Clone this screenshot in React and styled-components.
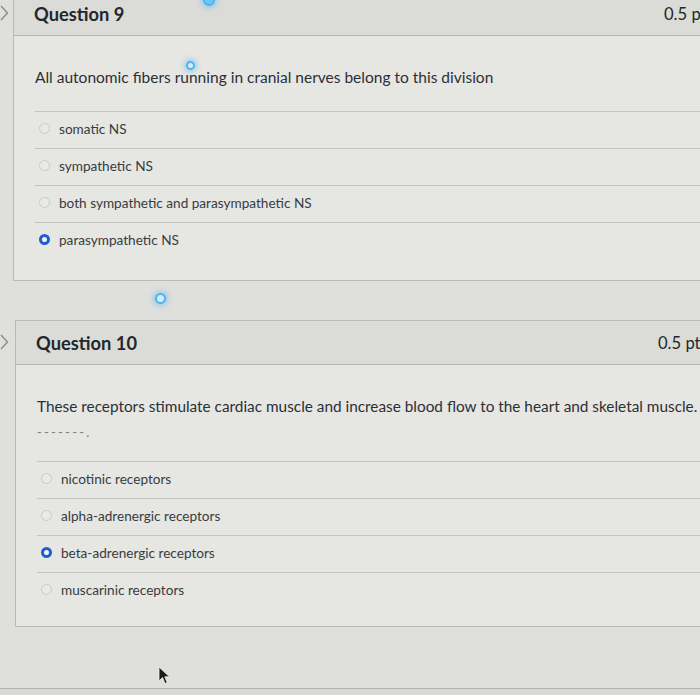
import styled, { createGlobalStyle } from 'styled-components'

const GlobalStyle = createGlobalStyle`
    html, body {
        margin: 0;
        padding: 0;
        background: #dfdfdc;
        overflow: hidden;
    }
    body {
        font-family: Lato, 'Open Sans', 'Liberation Sans', sans-serif;
        color: #2f3338;
    }
`

const questions = [
    {
        id: 9,
        title: 'Question 9',
        points: '0.5 p',
        text: 'All autonomic fibers running in cranial nerves belong to this division',
        blank: false,
        indent: 13,
        pointsWidth: 90,
        options: [
            { label: 'somatic NS' },
            { label: 'sympathetic NS' },
            { label: 'both sympathetic and parasympathetic NS' },
            { label: 'parasympathetic NS', checked: true },
        ],
    },
    {
        id: 10,
        title: 'Question 10',
        points: '0.5 pt',
        text: 'These receptors stimulate cardiac muscle and increase blood flow to the heart and skeletal muscle.',
        blank: true,
        indent: 15,
        pointsWidth: 98,
        options: [
            { label: 'nicotinic receptors' },
            { label: 'alpha-adrenergic receptors' },
            { label: 'beta-adrenergic receptors', checked: true },
            { label: 'muscarinic receptors' },
        ],
    },
]

const Chevron = () => (
    <svg width="9" height="16" viewBox="0 0 9 16">
        <path
            d="M1 1 L7.5 8 L1 15"
            fill="none"
            stroke="#8a8c8e"
            strokeWidth="1.4"
            strokeLinejoin="round"
        />
    </svg>
)

const Cursor = () => (
    <svg width="14" height="20" viewBox="0 0 14 20">
        <path
            d="M1 1 L1 15 L4.5 11.5 L7 17.5 L9.2 16.6 L6.8 10.8 L11.5 10.8 Z"
            fill="#1b1b1b"
            stroke="#f0f0f0"
            strokeWidth="0.8"
        />
    </svg>
)

export default function App() {
    return (
        <Page>
            <GlobalStyle />
            {questions.map((q) => (
                <QuestionRow key={q.id}>
                    <Marker $width={q.indent}>
                        <Chevron />
                    </Marker>
                    <Card>
                        <CardHeader>
                            <Title>{q.title}</Title>
                            <Points $width={q.pointsWidth}>{q.points}</Points>
                        </CardHeader>
                        <CardBody $bottom={q.blank ? 17 : 21}>
                            <QuestionText $wide={q.blank}>{q.text}</QuestionText>
                            {q.blank && <Blank>-------.</Blank>}
                            <Options $gap={q.blank ? 20 : 23}>
                                {q.options.map((o) => (
                                    <Option key={o.label}>
                                        <Radio $checked={o.checked} />
                                        <OptionLabel>{o.label}</OptionLabel>
                                    </Option>
                                ))}
                            </Options>
                        </CardBody>
                    </Card>
                </QuestionRow>
            ))}
            <Footer />
            <Glare $x={203} $y={-6} $size={12} $soft />
            <Glare $x={186} $y={61} $size={9} />
            <Glare $x={155} $y={293} $size={11} />
            <CursorSpot>
                <Cursor />
            </CursorSpot>
        </Page>
    )
}

const Page = styled.div`
    position: relative;
    width: 700px;
    height: 704px;
    overflow: hidden;
    display: flex;
    flex-direction: column;
    gap: 39px;
    margin-top: -9px;
`

const QuestionRow = styled.div`
    display: flex;
    align-items: flex-start;
`

const Marker = styled.div`
    width: ${({ $width }) => $width}px;
    flex-shrink: 0;
    height: 44px;
    display: flex;
    align-items: center;
    overflow: hidden;
`

const Card = styled.div`
    flex-shrink: 0;
    width: 760px;
    border: 1px solid #b9bab8;
    background: #e6e6e3;
`

const CardHeader = styled.div`
    height: 44px;
    box-sizing: border-box;
    background: #dbdbd8;
    border-bottom: 1px solid #b7b8b6;
    display: flex;
    align-items: center;
    padding: 0 20px;
    gap: 20px;
`

const Title = styled.h3`
    margin: 0;
    font-size: 18.3px;
    font-weight: 700;
    color: #23272b;
    flex: 1;
`

const Points = styled.span`
    width: ${({ $width }) => $width}px;
    font-size: 16.6px;
    font-weight: 400;
    color: #23272b;
`

const CardBody = styled.div`
    padding: 30px 0 ${({ $bottom }) => $bottom}px 21px;
`

const QuestionText = styled.p`
    margin: 0;
    font-size: ${({ $wide }) => ($wide ? 15.35 : 15.5)}px;
    line-height: 22px;
    white-space: nowrap;
    color: #2c3035;
`

const Blank = styled.div`
    margin-top: 6px;
    font-size: 13px;
    line-height: 18px;
    letter-spacing: 2.2px;
    color: #7c7f82;
`

const Options = styled.div`
    margin-top: ${({ $gap }) => $gap}px;
    display: flex;
    flex-direction: column;
`

const Option = styled.label`
    height: 37px;
    box-sizing: border-box;
    border-top: 1px solid #c4c5c2;
    display: flex;
    align-items: center;
    padding: 0 0 3px 4px;
    gap: 9px;
`

const Radio = styled.span`
    width: 11px;
    height: 11px;
    box-sizing: border-box;
    border-radius: 50%;
    flex-shrink: 0;
    border: ${({ $checked }) =>
        $checked ? '3.5px solid #1d5fd0' : '1px solid #c9cac7'};
    background: ${({ $checked }) => ($checked ? '#f4f6fa' : '#e9e9e6')};
`

const OptionLabel = styled.span`
    font-size: 13.6px;
    color: #383c40;
`

const Footer = styled.div`
    margin-top: 22px;
    height: 14px;
    border-top: 1px solid #b4b5b3;
    background: #d9d9d6;
`

const Glare = styled.span`
    position: absolute;
    left: ${({ $x }) => $x}px;
    top: ${({ $y }) => $y + 9}px;
    width: ${({ $size }) => $size}px;
    height: ${({ $size }) => $size}px;
    box-sizing: border-box;
    border-radius: 50%;
    border: 2px solid #4fb4f0;
    background: ${({ $soft }) => ($soft ? '#6cc6f5' : '#d6eefb')};
    box-shadow: 0 0 5px 2px rgba(90, 190, 245, 0.55);
`

const CursorSpot = styled.span`
    position: absolute;
    left: 158px;
    top: 675px;
`
